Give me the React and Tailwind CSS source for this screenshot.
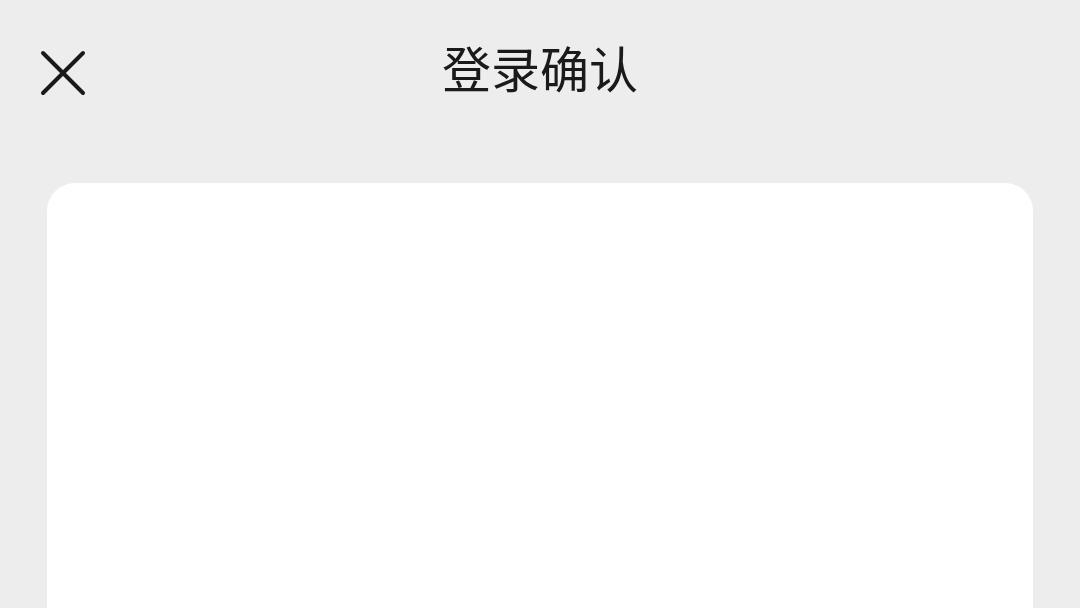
export default function App() {
  return (
    <div className="w-[1080px] h-[608px] bg-[#ededed] overflow-hidden flex flex-col" style={{ fontFamily: '"Noto Sans CJK SC", "Noto Sans", sans-serif' }}>
      <div className="relative h-[144px] shrink-0 flex items-start justify-center pt-[37px]">
        <button className="absolute left-[40px] top-[50px] w-[46px] h-[46px]">
          <svg viewBox="0 0 46 46" width="46" height="46">
            <path d="M3 3 L43 43 M43 3 L3 43" stroke="#1a1a1a" strokeWidth="4" strokeLinecap="round" fill="none" />
          </svg>
        </button>
        <h1 className="text-[49px] leading-[60px] text-[#1a1a1a] font-normal">登录确认</h1>
      </div>
      <div className="mx-[47px] mt-[39px] shrink-0 h-[600px] bg-white rounded-[28px]"></div>
    </div>
  );
}
